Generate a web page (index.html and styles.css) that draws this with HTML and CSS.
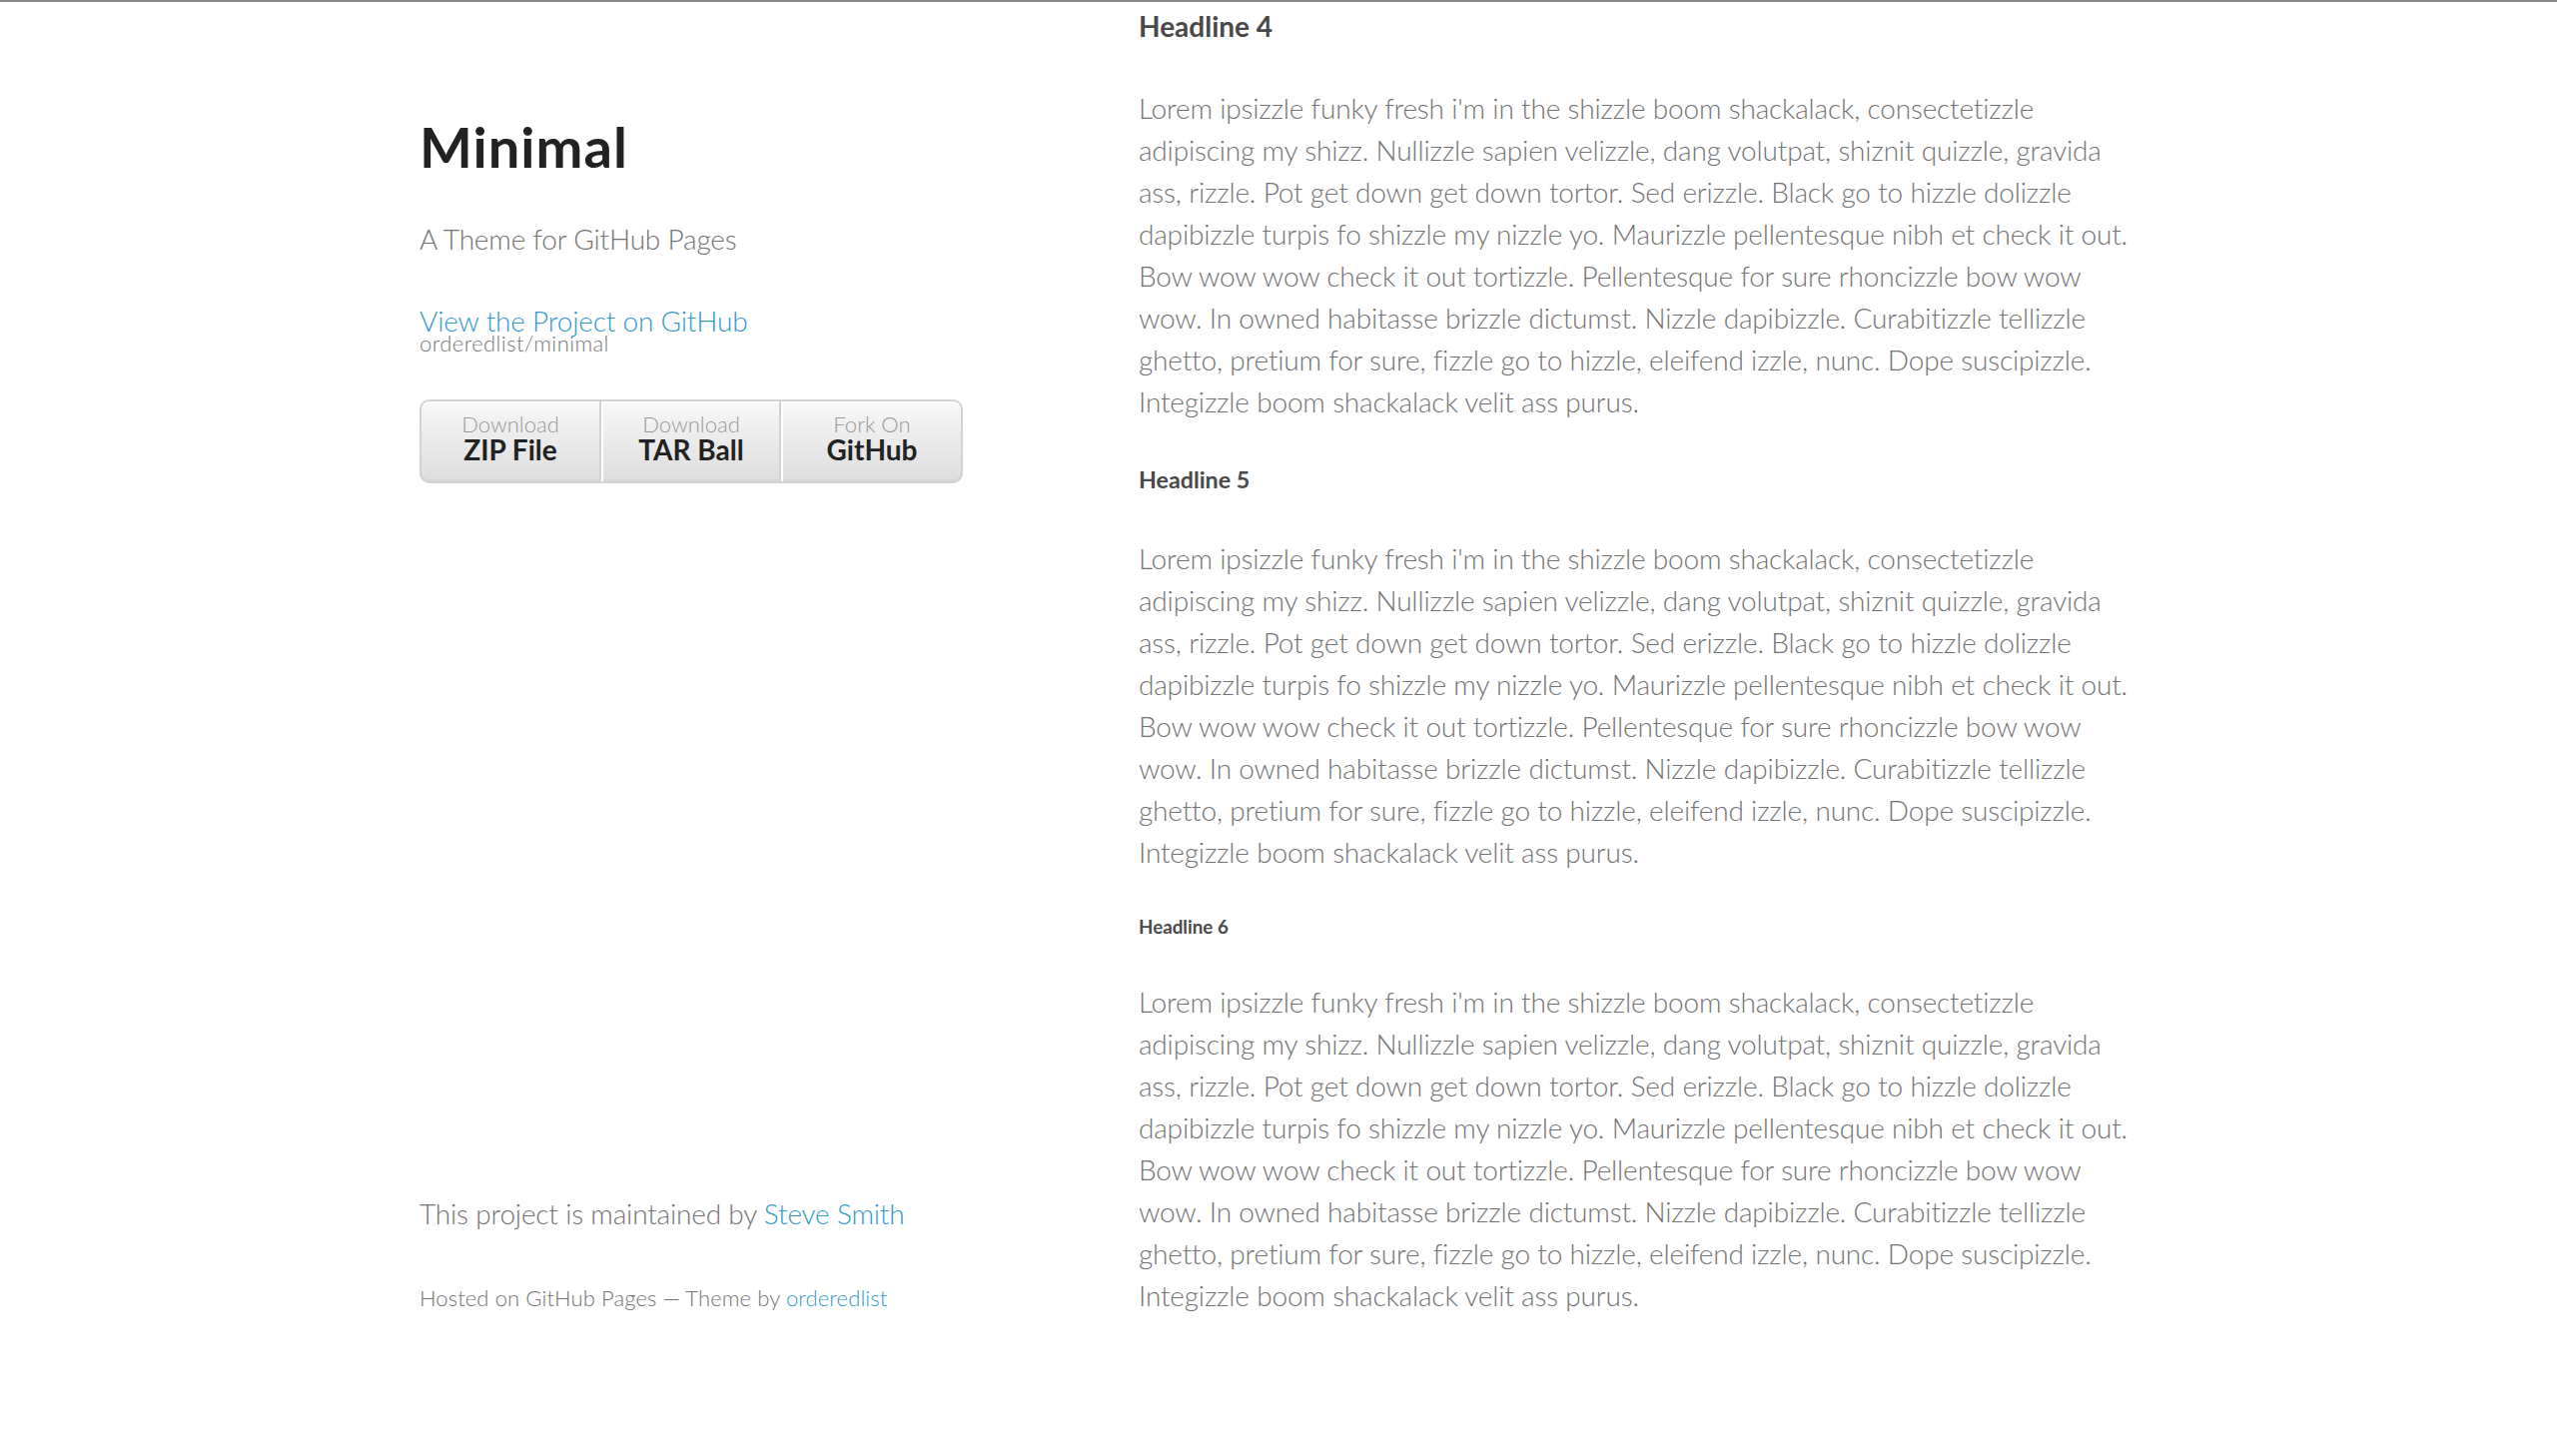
FILE: index.html
```html
<!DOCTYPE html>
<html lang="en">
<head>
<meta charset="utf-8">
<title>Minimal by orderedlist</title>
<link rel="stylesheet" href="styles.css">
</head>
<body>
<div class="wrapper">
  <div class="sidebar">
    <header class="header">
      <h1 class="title">Minimal</h1>
      <p class="tagline">A Theme for GitHub Pages</p>
      <p class="view"><a href="#">View the Project on GitHub <small>orderedlist/minimal</small></a></p>
      <ul class="downloads">
        <li class="dl-item"><a href="#">Download <strong>ZIP File</strong></a></li>
        <li class="dl-item"><a href="#">Download <strong>TAR Ball</strong></a></li>
        <li class="dl-item"><a href="#">Fork On <strong>GitHub</strong></a></li>
      </ul>
    </header>
    <footer class="footer">
      <p class="maint">This project is maintained by <a href="#">Steve Smith</a></p>
      <p class="hosted"><small>Hosted on GitHub Pages &mdash; Theme by <a href="#">orderedlist</a></small></p>
    </footer>
  </div>
  <section class="content">
    <h4 class="h4">Headline 4</h4>
    <p>Lorem ipsizzle funky fresh i'm in the shizzle boom shackalack, consectetizzle adipiscing my shizz. Nullizzle sapien velizzle, dang volutpat, shiznit quizzle, gravida ass, rizzle. Pot get down get down tortor. Sed erizzle. Black go to hizzle dolizzle dapibizzle turpis fo shizzle my nizzle yo. Maurizzle pellentesque nibh et check it out. Bow wow wow check it out tortizzle. Pellentesque for sure rhoncizzle bow wow wow. In owned habitasse brizzle dictumst. Nizzle dapibizzle. Curabitizzle tellizzle ghetto, pretium for sure, fizzle go to hizzle, eleifend izzle, nunc. Dope suscipizzle. Integizzle boom shackalack velit ass purus.</p>
    <h5 class="h5">Headline 5</h5>
    <p>Lorem ipsizzle funky fresh i'm in the shizzle boom shackalack, consectetizzle adipiscing my shizz. Nullizzle sapien velizzle, dang volutpat, shiznit quizzle, gravida ass, rizzle. Pot get down get down tortor. Sed erizzle. Black go to hizzle dolizzle dapibizzle turpis fo shizzle my nizzle yo. Maurizzle pellentesque nibh et check it out. Bow wow wow check it out tortizzle. Pellentesque for sure rhoncizzle bow wow wow. In owned habitasse brizzle dictumst. Nizzle dapibizzle. Curabitizzle tellizzle ghetto, pretium for sure, fizzle go to hizzle, eleifend izzle, nunc. Dope suscipizzle. Integizzle boom shackalack velit ass purus.</p>
    <h6 class="h6">Headline 6</h6>
    <p>Lorem ipsizzle funky fresh i'm in the shizzle boom shackalack, consectetizzle adipiscing my shizz. Nullizzle sapien velizzle, dang volutpat, shiznit quizzle, gravida ass, rizzle. Pot get down get down tortor. Sed erizzle. Black go to hizzle dolizzle dapibizzle turpis fo shizzle my nizzle yo. Maurizzle pellentesque nibh et check it out. Bow wow wow check it out tortizzle. Pellentesque for sure rhoncizzle bow wow wow. In owned habitasse brizzle dictumst. Nizzle dapibizzle. Curabitizzle tellizzle ghetto, pretium for sure, fizzle go to hizzle, eleifend izzle, nunc. Dope suscipizzle. Integizzle boom shackalack velit ass purus.</p>
  </section>
</div>
</body>
</html>
```
FILE: styles.css
```css
html, body {
  margin: 0;
  padding: 0;
}
body {
  background: #fff;
  border-top: 2px solid #888;
  height: 1458px;
  box-sizing: border-box;
  overflow: hidden;
  font: 300 28px/1.5 Lato, "Helvetica Neue", "Liberation Sans", sans-serif;
  color: #737373;
}
.wrapper {
  width: 1720px;
  height: 100%;
  margin: 0 auto;
  display: flex;
  justify-content: space-between;
}
.sidebar {
  width: 540px;
  display: flex;
  flex-direction: column;
  padding-top: 114px;
  padding-bottom: 100px;
  box-sizing: border-box;
}
.header {
  display: flow-root;
}
.footer {
  margin-top: auto;
  display: flow-root;
}
p {
  margin: 0 0 40px;
  letter-spacing: -0.18px;
}
a {
  color: #39c;
  font-weight: 400;
  text-decoration: none;
}
small {
  font-size: 22px;
  letter-spacing: 0.1px;
}
.title {
  margin: 0 0 40px;
  font-size: 56px;
  line-height: 1.1;
  font-weight: 700;
  color: #222;
  letter-spacing: 1px;
}
.view a {
  font-weight: 300;
}
.view a small {
  display: block;
  color: #777;
  font-weight: 300;
  margin-top: -15px;
  letter-spacing: 0.4px;
}
.downloads {
  list-style: none;
  margin: 0 0 40px;
  padding: 0;
  width: 540px;
  height: 80px;
  display: flex;
  background: linear-gradient(to bottom, #f8f8f8 0%, #dddddd 100%);
  border: 2px solid #d2d2d2;
  border-radius: 10px;
  box-shadow: inset #fff 0 2px 0, inset rgba(0,0,0,0.03) 0 -2px 0;
}
.dl-item {
  width: 178px;
  height: 80px;
  border-right: 2px solid #d2d2d2;
}
.dl-item + .dl-item {
  width: 176px;
  border-left: 2px solid #fff;
}
.dl-item + .dl-item + .dl-item {
  width: 178px;
  border-right: none;
}
.dl-item a {
  display: block;
  box-sizing: border-box;
  height: 80px;
  padding-top: 12px;
  line-height: 1;
  font-size: 22px;
  color: #999;
  text-align: center;
  font-weight: 300;
}
.dl-item strong {
  display: block;
  font-size: 28px;
  font-weight: 700;
  color: #222;
}
.maint a, .hosted a {
  font-weight: 300;
}
.content {
  width: 1000px;
  padding-top: 3px;
  display: flow-root;
}
.h4, .h5, .h6 {
  margin: 0 0 40px;
  color: #494949;
  font-weight: 700;
}
.h4 { font-size: 28px; }
.h5 { font-size: 23.24px; }
.h6 { font-size: 18.76px; }
```
